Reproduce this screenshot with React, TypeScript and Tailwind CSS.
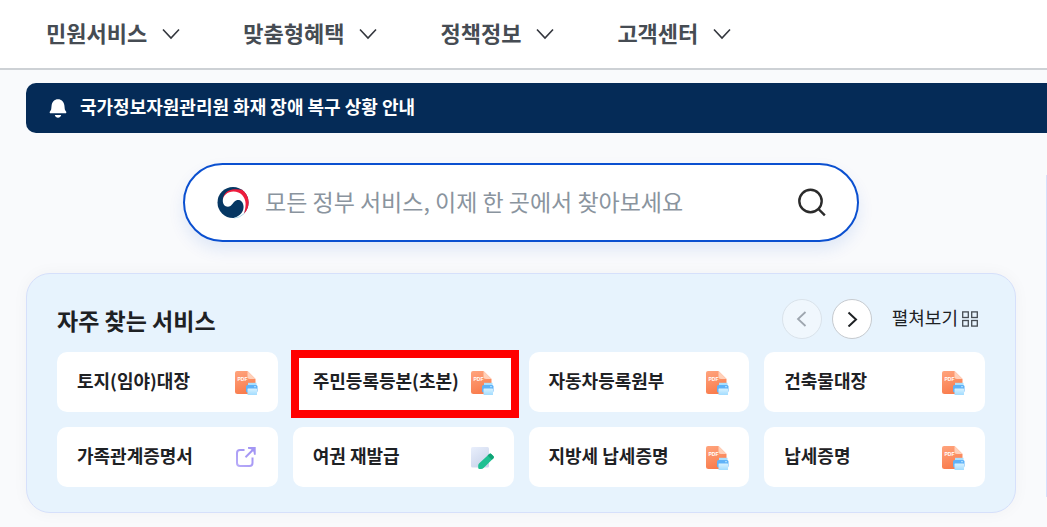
import React from "react";

type IconKind = "pdf" | "link" | "write";

interface Service {
  name: string;
  icon: IconKind;
  highlighted?: boolean;
}

const menus = ["민원서비스", "맞춤형혜택", "정책정보", "고객센터"];

const services: Service[] = [
  { name: "토지(임야)대장", icon: "pdf" },
  { name: "주민등록등본(초본)", icon: "pdf", highlighted: true },
  { name: "자동차등록원부", icon: "pdf" },
  { name: "건축물대장", icon: "pdf" },
  { name: "가족관계증명서", icon: "link" },
  { name: "여권 재발급", icon: "write" },
  { name: "지방세 납세증명", icon: "pdf" },
  { name: "납세증명", icon: "pdf" },
];

function ChevronDown() {
  return (
    <svg className="h-3 w-5" viewBox="0 0 20 12" fill="none" stroke="#33363d" strokeWidth="1.6" aria-hidden="true">
      <path d="M2 1.5 10 10 18 1.5" />
    </svg>
  );
}

function BellIcon() {
  return (
    <svg className="h-5 w-5" viewBox="0 0 20 20" fill="#fff" aria-hidden="true">
      <path d="M10 1.200C6.500 1.200 4 3.800 3.600 7.400L3.200 11.200C3.100 12 2.700 12.500 2.100 13.200 1.300 14.200 1.600 15.300 2.800 15.300H17.200C18.400 15.300 18.700 14.200 17.900 13.200 17.300 12.500 16.900 12 16.800 11.200L16.400 7.400C16 3.800 13.500 1.200 10 1.200Z" />
      <path d="M6.800 17H13.200C12.700 18.800 11.500 19.800 10 19.800S7.300 18.800 6.800 17Z" />
    </svg>
  );
}

function GovLogo() {
  return (
    <svg className="size-8 shrink-0" viewBox="0 0 32 32" aria-hidden="true">
      <circle cx="16" cy="15.500" r="15.500" fill="#063763" />
      <path d="M5.800 13C6.300 6.500 11 2.500 17.500 2.200 20.500 2.100 23 2.200 25 2.800A15.600 15.600 0 0 1 27 26.700C28.200 23 28.200 18.500 27.500 15.500 26 9 21 6.500 16 6.500 11 6.500 7.500 9.500 5.800 13Z" fill="#ee1c3c" />
      <path d="M5.800 13.500C6 8.500 10.500 4.500 16.500 4.500 23.500 4.500 28.600 10 28.600 16.800 28.600 21 27.800 24 26.800 26.900A15.900 15.900 0 0 1 16.500 31.300C23.500 29 27.100 24 26.500 19 25.800 13 20.500 11.500 17.300 14.800 15.200 17.100 14 19.700 11 19.700 7.800 19.700 5.700 17 5.800 13.500Z" fill="#fff" />
      <path d="M17 31.100A15.600 15.600 0 0 0 27 26.700" fill="none" stroke="#8fcfe8" strokeWidth=".6" />
    </svg>
  );
}

function SearchIcon() {
  return (
    <svg className="size-8" viewBox="0 0 32 32" fill="none" stroke="#2b2b2b" strokeWidth="2.400" strokeLinecap="square" aria-hidden="true">
      <circle cx="14.500" cy="14" r="11.200" />
      <path d="m23 22.500 5 5" />
    </svg>
  );
}

function GridIcon() {
  return (
    <svg className="size-4" viewBox="0 0 16 16" fill="none" stroke="#464c53" strokeWidth="1.300" aria-hidden="true">
      <rect x=".7" y=".9" width="5.600" height="5.600" />
      <rect x="9.700" y=".9" width="5.600" height="5.600" />
      <rect x=".7" y="9.500" width="5.600" height="5.600" />
      <rect x="9.700" y="9.500" width="5.600" height="5.600" />
    </svg>
  );
}

function PdfIcon({ id }: { id: string }) {
  return (
    <svg className="size-6" viewBox="0 0 24 24" aria-hidden="true">
      <defs>
        <linearGradient id={`${id}-page`} x1="0" y1="0" x2="0.300" y2="1">
          <stop offset="0" stopColor="#ffa47d" />
          <stop offset="1" stopColor="#f97d4e" />
        </linearGradient>
        <linearGradient id={`${id}-paper`} x1="0" y1="0" x2="0" y2="1">
          <stop offset="0" stopColor="#d8f2ff" />
          <stop offset="1" stopColor="#a2dcff" />
        </linearGradient>
      </defs>
      <path d="M3 0H13.500L21.500 8V20.500Q21.500 23 19 23H3.500Q1 23 1 20.500V2Q1 0 3 0Z" fill={`url(#${id}-page)`} />
      <path d="M13.500 0 21.500 8H16Q13.500 8 13.500 5.500Z" fill="#ffd0b9" />
      <text x="3.500" y="10.200" className="font-['Liberation_Sans'] text-[5px] font-bold" fill="#fff">PDF</text>
      <rect x="14" y="11.800" width="8.500" height="3" fill="#a9e0ff" />
      <rect x="12" y="14" width="11.500" height="7.500" rx="1.500" fill="#5fb2f8" />
      <rect x="20" y="15.200" width="2" height="1" fill="#b6e4ff" />
      <rect x="13.500" y="17.500" width="9.500" height="6.500" rx=".6" fill={`url(#${id}-paper)`} />
    </svg>
  );
}

function LinkIcon() {
  return (
    <svg className="size-6" viewBox="0 0 24 24" fill="none" aria-hidden="true">
      <defs>
        <linearGradient id="link-stroke" x1="2" y1="21" x2="21" y2="3" gradientUnits="userSpaceOnUse">
          <stop offset="0" stopColor="#b9adf9" />
          <stop offset="1" stopColor="#9c8df2" />
        </linearGradient>
      </defs>
      <g stroke="url(#link-stroke)" strokeWidth="2">
        <path d="M10.500 4H6Q3 4 3 7V17Q3 20 6 20H15.500Q18.500 20 18.500 17V11.500" />
        <path d="M11.500 11.300 19.500 3.300" />
      </g>
      <path d="M14 1H21.700V8.700H20L19.500 5.800 17 3.200 14 2.800Z" fill="#a396f4" />
    </svg>
  );
}

function WriteIcon() {
  return (
    <svg className="size-6" viewBox="0 0 24 24" aria-hidden="true">
      <defs>
        <linearGradient id="write-page" x1="0" y1="0" x2="0.600" y2="1">
          <stop offset="0" stopColor="#e9effc" />
          <stop offset="1" stopColor="#cbd5eb" />
        </linearGradient>
      </defs>
      <rect x="1" y="1" width="18" height="20.500" rx="1.500" fill="url(#write-page)" />
      <path d="M9 17.500 19 8.200Q20.300 7 21.500 8.200L23.300 10Q24.400 11.200 23.200 12.400L13.800 21.800Q12.600 23 11 23H9.500Q8.200 23 8.200 21.700V19.500Q8.200 18.300 9 17.500Z" fill="#1fc092" />
      <path d="M17.600 9.600 19 8.200Q20.300 7 21.500 8.200L23.300 10Q24.400 11.200 23.200 12.400L21.800 13.800Z" fill="#10a476" />
    </svg>
  );
}

function ServiceIcon({ kind, id }: { kind: IconKind; id: string }) {
  if (kind === "link") return <LinkIcon />;
  if (kind === "write") return <WriteIcon />;
  return <PdfIcon id={id} />;
}

export default function App() {
  return (
    <div className="min-h-screen overflow-hidden bg-[#f9fafc] font-['Noto_Sans_CJK_KR','Noto_Sans',sans-serif] text-[#1e2124]">
      <header className="border-b-2 border-[#cdd1d5] bg-white">
        <nav className="flex h-[68px] items-center gap-[62px] pl-[46px]" aria-label="주 메뉴">
          {menus.map((menu) => (
            <button key={menu} type="button" className="flex items-center gap-3.5 text-[22px] leading-8 font-bold whitespace-nowrap text-[#464c53]">
              <span className="pb-1">{menu}</span>
              <ChevronDown />
            </button>
          ))}
        </nav>
      </header>

      <div className="pt-[13px] pl-[26px]">
        <a href="#notice" className="flex h-[50px] items-center gap-3 rounded-l-[10px] bg-[#052b57] pl-[22px] text-lg leading-6 font-bold text-white">
          <BellIcon />
          <span className="pb-1">국가정보자원관리원 화재 장애 복구 상황 안내</span>
        </a>

        <div className="flex gap-[30px] pt-[30px] pb-3.5">
          <main className="min-w-0 flex-1">
            <form
              role="search"
              onSubmit={(event) => event.preventDefault()}
              className="mx-[157px] flex h-[79px] items-center gap-4 rounded-full border-2 border-[#0b50d0] bg-white pr-[29px] pl-8 shadow-[0_8px_16px_rgba(11,80,208,0.1)]"
            >
              <GovLogo />
              <input
                type="search"
                aria-label="정부 서비스 검색"
                placeholder="모든 정부 서비스, 이제 한 곳에서 찾아보세요"
                className="min-w-0 flex-1 bg-transparent pb-1 text-[23px] leading-8 outline-none placeholder:text-[#8a949e]"
              />
              <button type="submit" aria-label="검색">
                <SearchIcon />
              </button>
            </form>

            <section className="mt-[31px] rounded-[24px] border border-[#d6e0fb] bg-[#e7f3fd] px-[30px] pt-[25px] pb-[25px] shadow-[0_0_16px_rgba(0,0,0,0.04)]">
              <div className="flex h-10 items-center">
                <h2 className="flex-1 pt-0.5 text-[23px] leading-8 font-bold">자주 찾는 서비스</h2>
                <div className="flex items-center gap-2.5">
                  <button type="button" disabled aria-label="이전" className="flex size-10 items-center justify-center rounded-full border border-[#c6cacf] bg-white opacity-40">
                    <svg className="size-4" viewBox="0 0 16 16" fill="none" stroke="#33363d" strokeWidth="1.800" aria-hidden="true">
                      <path d="M11.500 1 4 8l7.500 7" />
                    </svg>
                  </button>
                  <button type="button" aria-label="다음" className="flex size-10 items-center justify-center rounded-full border border-[#c6cacf] bg-white">
                    <svg className="size-4" viewBox="0 0 16 16" fill="none" stroke="#1e2124" strokeWidth="2" aria-hidden="true">
                      <path d="M4.500 1.500 12 8.500l-7.500 7" />
                    </svg>
                  </button>
                </div>
                <button type="button" className="mr-[7px] ml-5 flex items-center gap-1 text-lg leading-6">
                  <span className="pb-1">펼쳐보기</span>
                  <GridIcon />
                </button>
              </div>

              <ul className="mt-[13px] grid grid-cols-4 gap-[15px]">
                {services.map((service, index) => (
                  <li key={service.name} className="relative">
                    <a href={`#service-${index}`} className="flex h-[60px] items-center justify-between rounded-[10px] bg-white px-5 pt-0.5 text-lg leading-6 font-bold whitespace-nowrap">
                      <span className="pb-1.5">{service.name}</span>
                      <ServiceIcon kind={service.icon} id={`service-icon-${index}`} />
                    </a>
                    {service.highlighted && (
                      <span className="pointer-events-none absolute -top-0.5 -right-[5px] -bottom-1.5 -left-0.5 border-8 border-[#ff0000]" />
                    )}
                  </li>
                ))}
              </ul>
            </section>
          </main>
          <aside className="mt-3 mb-4 w-px bg-[#d6e0fb] shadow-[0_0_16px_rgba(0,0,0,0.04)]" />
        </div>
      </div>
    </div>
  );
}
